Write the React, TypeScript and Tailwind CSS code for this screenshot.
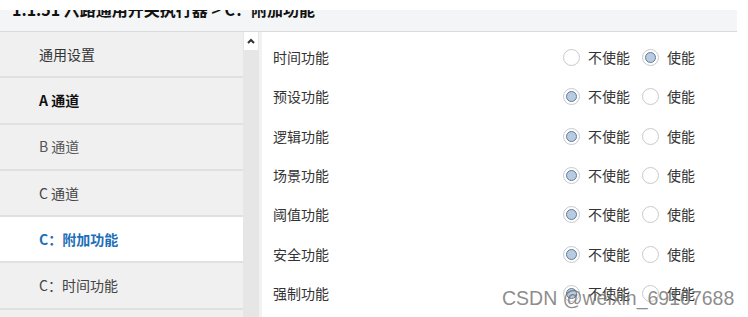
import React from 'react';

const font = { fontFamily: '"Noto Sans CJK SC", "Liberation Sans", sans-serif' };

const Radio: React.FC<{ on: boolean; label: string }> = ({ on, label }) => (
  <label className="flex items-center gap-[8px]">
    <span className="flex h-[17px] w-[17px] items-center justify-center rounded-full border border-[#c9c9c9] bg-white">
      {on && <span className="h-[11px] w-[11px] rounded-full border border-[#5f7b9c] bg-[#b8cbe0]" />}
    </span>
    <span className="text-[14px] text-[#333]">{label}</span>
  </label>
);

const App: React.FC = () => {
  const nav = [
    { name: '通用设置', cls: 'text-[#333]' },
    { name: 'A 通道', cls: 'font-bold text-[#111]' },
    { name: 'B 通道', cls: 'text-[#555]' },
    { name: 'C 通道', cls: 'text-[#444]' },
    { name: 'C：附加功能', cls: 'font-bold text-[#1d6fb8]', active: true },
    { name: 'C：时间功能', cls: 'text-[#444]' },
    { name: 'C：场景功能', cls: 'text-[#444]' },
  ];

  // enabled = "使能" is checked
  const rows = [
    { name: '时间功能', enabled: true },
    { name: '预设功能', enabled: false },
    { name: '逻辑功能', enabled: false },
    { name: '场景功能', enabled: false },
    { name: '阈值功能', enabled: false },
    { name: '安全功能', enabled: false },
    { name: '强制功能', enabled: false },
  ];

  return (
    <div className="relative h-[317px] w-[748px] overflow-hidden bg-white" style={font}>
      <div className="h-[10px]" />
      <div className="h-[22px] w-[737px] overflow-hidden border-b border-[#dadada] bg-[#f4f5f6]">
        <div className="-mt-[12px] pl-[12px] text-[16px] font-bold leading-[22px] text-[#111]">
          1.1.51 六路通用开关执行器 &gt; C：附加功能
        </div>
      </div>

      <div className="flex h-[285px]">
        <div className="w-[243px] shrink-0 bg-[#f0f0f0]">
          {nav.map((n) => (
            <div
              key={n.name}
              className={`flex h-[46.3px] items-center border-b-2 border-[#e0e0e0] pl-[39px] text-[14px] ${n.cls} ${n.active ? 'bg-white' : ''}`}
            >
              {n.name}
            </div>
          ))}
        </div>

        <div className="w-[16px] shrink-0 bg-[#e6e6e6]">
          <div className="mx-[1px] flex h-[18px] items-center justify-center bg-white">
            <svg width="8" height="6" viewBox="0 0 8 6">
              <path d="M1 5 L4 2 L7 5" fill="none" stroke="#333" strokeWidth="2" />
            </svg>
          </div>
        </div>

        <div className="flex-1 border-l-[3px] border-[#f2f2f2] bg-white pt-[6px]">
          {rows.map((r) => (
            <div key={r.name} className="flex h-[39.3px] items-center">
              <div className="w-[301px] pl-[11px] text-[14px] text-[#333]">{r.name}</div>
              <div className="flex items-center gap-[12px]">
                <Radio on={!r.enabled} label="不使能" />
                <Radio on={r.enabled} label="使能" />
              </div>
            </div>
          ))}
        </div>
      </div>

      <div
        className="absolute left-[502px] top-[286px] text-[19.5px] leading-[24px] text-[rgba(110,110,110,0.8)]"
        style={{ fontFamily: '"Liberation Sans", Arial, sans-serif' }}
      >
        CSDN @weixin_69107688
      </div>
    </div>
  );
};

export default App;
